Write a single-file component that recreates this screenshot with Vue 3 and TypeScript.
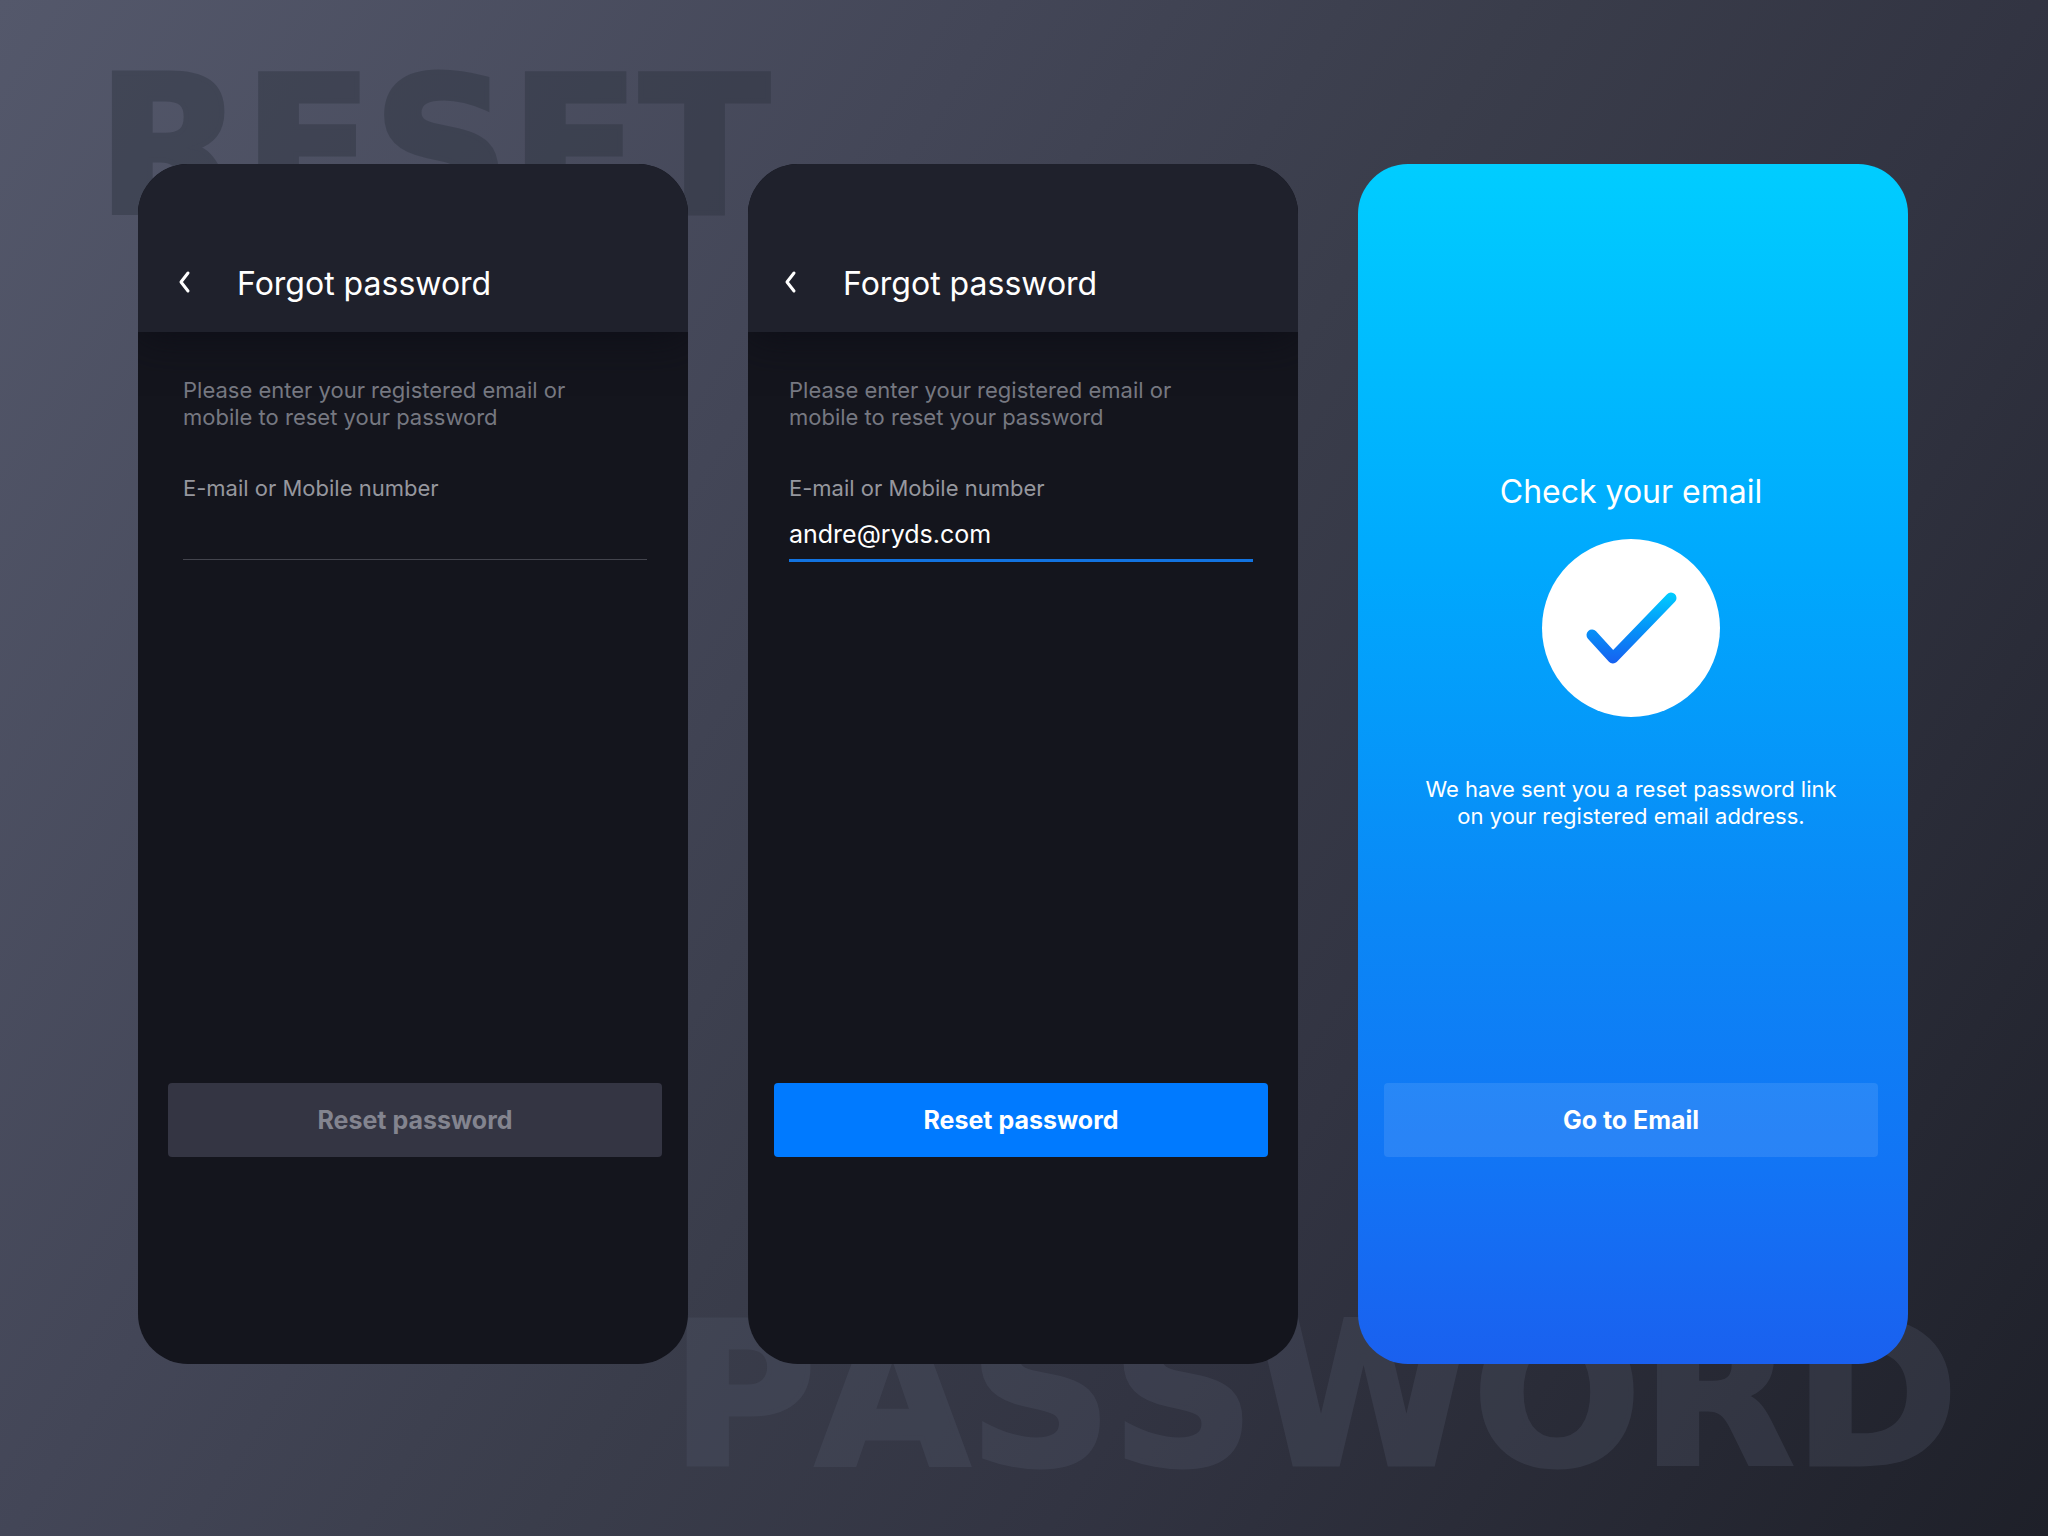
<script setup lang="ts">
interface ResetScreen {
  id: string
  value: string
  active: boolean
}

const screens: ResetScreen[] = [
  { id: 'empty', value: '', active: false },
  { id: 'filled', value: 'andre@ryds.com', active: true },
]
</script>

<template>
  <main class="page">
    <span class="watermark watermark-top" aria-hidden="true">RESET</span>
    <span class="watermark watermark-bottom" aria-hidden="true">PASSWORD</span>

    <div class="screens">
      <section
        v-for="screen in screens"
        :key="screen.id"
        class="screen form-screen"
        :class="{ active: screen.active }"
      >
        <header class="bar">
          <button class="back" type="button" aria-label="Back">
            <svg viewBox="0 0 14 24" width="14" height="24" aria-hidden="true">
              <path d="M11 3 4 12l7 9" />
            </svg>
          </button>
          <h1 class="title">Forgot password</h1>
        </header>

        <form class="form" @submit.prevent>
          <div class="fields">
            <p class="intro">
              Please enter your registered email or<br />mobile to reset your password
            </p>
            <label class="label" :for="`contact-${screen.id}`">E-mail or Mobile number</label>
            <input :id="`contact-${screen.id}`" class="input" type="text" :value="screen.value" />
          </div>
          <button class="action" type="submit" :disabled="!screen.active">Reset password</button>
        </form>
      </section>

      <section class="screen sent-screen">
        <h2 class="title sent-title">Check your email</h2>
        <svg class="badge" viewBox="0 0 178 178" width="178" height="178" aria-hidden="true">
          <defs>
            <linearGradient id="tick" gradientUnits="userSpaceOnUse" x1="0" y1="54" x2="0" y2="125">
              <stop offset="0" stop-color="#00ccff" />
              <stop offset="0.5" stop-color="#0593f8" />
              <stop offset="1" stop-color="#175ff0" />
            </linearGradient>
          </defs>
          <circle cx="89" cy="89" r="89" fill="#fff" />
          <path class="tick" d="M50 96 71 119 129 59" />
        </svg>
        <p class="sent-text">
          We have sent you a reset password link<br />on your registered email address.
        </p>
        <button class="action" type="button">Go to Email</button>
      </section>
    </div>
  </main>
</template>

<style>
body {
  margin: 0;
}
</style>

<style scoped>
.page {
  position: relative;
  box-sizing: border-box;
  display: flex;
  min-height: 100vh;
  padding: 164px 140px 172px 138px;
  overflow: hidden;
  background: linear-gradient(123deg, #54586b 0%, #434657 33%, #3a3d4b 50%, #323442 67%, #1e2029 100%);
  color: #fff;
  font-family: Inter, 'Open Sans', sans-serif;
}

.watermark {
  position: absolute;
  font-family: 'DejaVu Sans', sans-serif;
  font-weight: 700;
  font-kerning: none;
  line-height: 232px;
  -webkit-text-stroke: 5px currentColor;
}

.watermark-top {
  top: 32px;
  left: 97px;
  color: #2c323e;
  font-size: 190px;
  opacity: 0.42;
}

.watermark-bottom {
  right: 90px;
  bottom: 24px;
  color: #52586a;
  font-size: 198px;
  opacity: 0.3;
}

.screens {
  position: relative;
  display: grid;
  flex: 1;
  grid-template-columns: repeat(3, 1fr);
  gap: 60px;
}

.screen {
  --start: 26px;
  --end: 30px;
  display: flex;
  flex-direction: column;
  overflow: hidden;
  border-radius: 50px;
}

.form-screen {
  background: #14151d;
}

.form-screen:not(.active) {
  --start: 30px;
  --end: 26px;
}

.bar {
  display: flex;
  align-items: center;
  gap: 46px;
  padding: 96px var(--end) 24px var(--start);
  background: #1f212c;
  box-shadow: 0 4px 40px #0d0e17;
}

.back {
  display: flex;
  margin: 0 0 0 9px;
  padding: 10px 0 14px;
  border: 0;
  background: none;
  cursor: pointer;
}

.back path {
  fill: none;
  stroke: #fff;
  stroke-width: 3;
  stroke-linecap: round;
  stroke-linejoin: round;
}

.title {
  margin: 0;
  font-size: 32px;
  font-weight: 400;
  line-height: 36px;
}

.form {
  display: flex;
  flex: 1;
  flex-direction: column;
  padding: 45px var(--end) 207px var(--start);
}

.fields {
  display: flex;
  flex-direction: column;
  margin: 0 15px;
}

.intro,
.label {
  font-size: 22px;
  line-height: 27px;
}

.intro {
  margin: 0 0 44px;
  color: #767881;
}

.label {
  color: #96979e;
}

.input {
  box-sizing: border-box;
  width: 100%;
  height: 58px;
  padding: 10px 0 4px;
  border: 0;
  border-bottom: 1px solid #43444d;
  outline: 0;
  background: none;
  color: #fff;
  font: inherit;
  font-size: 25px;
}

.active .input {
  height: 60px;
  border-bottom: 3px solid #1273e0;
}

.action {
  height: 74px;
  margin-top: auto;
  border: 0;
  border-radius: 4px;
  background: #007aff;
  color: #fff;
  font: inherit;
  font-size: 25px;
  font-weight: 700;
  cursor: pointer;
}

.action:disabled {
  background: #343543;
  color: #83848f;
  cursor: default;
}

.sent-screen {
  padding: 310px var(--end) 207px var(--start);
  background: linear-gradient(#00cdff 0%, #00a8fd 34%, #0a88f6 62%, #1274f5 84%, #1a60ef 100%);
}

.sent-title,
.sent-text {
  text-align: center;
}

.badge {
  align-self: center;
  margin: 29px 0 59px;
}

.tick {
  fill: none;
  stroke: url(#tick);
  stroke-width: 11;
  stroke-linecap: round;
  stroke-linejoin: round;
}

.sent-text {
  margin: 0;
  font-size: 22px;
  line-height: 27px;
}

.sent-screen .action {
  background: rgba(255, 255, 255, 0.1);
}
</style>
